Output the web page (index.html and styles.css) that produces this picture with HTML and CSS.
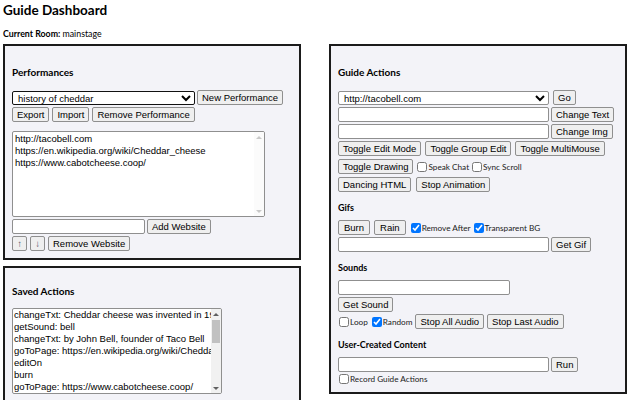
FILE: index.html
```html
<!DOCTYPE html>
<html>
<head>
<meta charset="utf-8">
<title>Guide Dashboard</title>
<link rel="stylesheet" href="styles.css">
</head>
<body>
<h1 class="page-title">Guide Dashboard</h1>
<div class="room"><b>Current Room:</b> mainstage</div>
<div class="layout">
  <div class="col">
    <section class="panel perf">
      <h3 class="panel-title">Performances</h3>
      <div class="row">
        <select class="sel perf-sel"><option>history of cheddar</option></select>
        <button>New Performance</button>
      </div>
      <div class="row gap3">
        <button>Export</button>
        <button>Import</button>
        <button>Remove Performance</button>
      </div>
      <div class="scrollbox sites-box">
        <textarea class="sites">http://tacobell.com
https://en.wikipedia.org/wiki/Cheddar_cheese
https://www.cabotcheese.coop/</textarea>
        <div class="vscroll light">
          <span class="sb-btn up"></span>
          <span class="sb-track"></span>
          <span class="sb-btn down"></span>
        </div>
      </div>
      <div class="row">
        <input type="text" class="site-in">
        <button>Add Website</button>
      </div>
      <div class="row gap3">
        <button class="arrow">&#8593;</button>
        <button class="arrow">&#8595;</button>
        <button>Remove Website</button>
      </div>
    </section>
    <section class="panel saved">
      <h3 class="panel-title">Saved Actions</h3>
      <div class="scrollbox actions-box">
        <select class="actions" multiple size="7">
          <option>changeTxt: Cheddar cheese was invented in 1900s</option>
          <option>getSound: bell</option>
          <option>changeTxt: by John Bell, founder of Taco Bell</option>
          <option>goToPage: https://en.wikipedia.org/wiki/Cheddar_cheese</option>
          <option>editOn</option>
          <option>burn</option>
          <option>goToPage: https://www.cabotcheese.coop/</option>
          <option>changeTxt: Cabot makes cheddar</option>
          <option>getSound: applause</option>
          <option>rain</option>
          <option>editOff</option>
          <option>getGif: cheese</option>
          <option>toggleDrawing</option>
          <option>changeImg: cheese</option>
          <option>goToPage: http://tacobell.com</option>
          <option>dancingHTML</option>
          <option>stopAnimation</option>
          <option>getSound: moo</option>
          <option>burn</option>
          <option>changeTxt: The end</option>
          <option>stopAllAudio</option>
          <option>editOff</option>
          <option>rain</option>
        </select>
        <div class="vscroll">
          <span class="sb-btn up dark"></span>
          <span class="sb-track"><span class="sb-thumb"></span></span>
          <span class="sb-btn down dark"></span>
        </div>
      </div>
    </section>
  </div>
  <section class="panel guide">
    <h3 class="panel-title">Guide Actions</h3>
    <div class="row gap4">
      <select class="sel wide"><option>http://tacobell.com</option></select>
      <button>Go</button>
    </div>
    <div class="row">
      <input type="text" class="wide">
      <button>Change Text</button>
    </div>
    <div class="row">
      <input type="text" class="wide">
      <button>Change Img</button>
    </div>
    <div class="row gap4">
      <button>Toggle Edit Mode</button>
      <button>Toggle Group Edit</button>
      <button>Toggle MultiMouse</button>
    </div>
    <div class="row gap3 tall">
      <button>Toggle Drawing</button>
      <span class="checks">
        <label class="check"><input type="checkbox">Speak Chat</label>
        <label class="check"><input type="checkbox">Sync Scroll</label>
      </span>
    </div>
    <div class="row gap5">
      <button>Dancing HTML</button>
      <button>Stop Animation</button>
    </div>
    <h4 class="sub-title">Gifs</h4>
    <div class="row gap4">
      <button class="padded">Burn</button>
      <button class="padded">Rain</button>
      <span class="checks">
        <label class="check"><input type="checkbox" checked>Remove After</label>
        <label class="check"><input type="checkbox" checked>Transparent BG</label>
      </span>
    </div>
    <div class="row">
      <input type="text" class="wide">
      <button>Get Gif</button>
    </div>
    <h4 class="sub-title">Sounds</h4>
    <div class="row">
      <input type="text" class="sound-in">
    </div>
    <div class="row">
      <button>Get Sound</button>
    </div>
    <div class="row gap3">
      <label class="check"><input type="checkbox">Loop</label>
      <label class="check"><input type="checkbox" checked>Random</label>
      <button>Stop All Audio</button>
      <button>Stop Last Audio</button>
    </div>
    <h4 class="sub-title">User-Created Content</h4>
    <div class="row">
      <input type="text" class="wide">
      <button>Run</button>
    </div>
    <label class="check record"><input type="checkbox">Record Guide Actions</label>
  </section>
</div>
</body>
</html>
```
FILE: styles.css
```css
html, body {
  margin: 0;
  background: #ffffff;
}
body {
  padding: 0 3px;
  font-family: Lato, "Open Sans", sans-serif;
  color: #000;
}
.page-title {
  font-size: 13.5px;
  font-weight: 700;
  line-height: 16px;
  margin: 2px 0 0;
}
.room {
  font-size: 8.8px;
  line-height: 10px;
  margin-top: 11px;
}
.layout {
  display: flex;
  align-items: flex-start;
  gap: 28px;
  margin-top: 5px;
}
.col {
  width: 298px;
  display: flex;
  flex-direction: column;
  gap: 6px;
}
.panel {
  box-sizing: border-box;
  border: 2px solid #1b1b1b;
  background: #f3f3f8;
  padding: 21px 7px 8px;
}
.guide {
  width: 298px;
  height: 350px;
}
.perf { height: 216px; }
.saved { height: 140px; padding-top: 18px; }
.panel-title {
  font-size: 10px;
  font-weight: 700;
  line-height: 10px;
  margin: 0 0 13px;
}
.saved .panel-title { margin-bottom: 12px; }
.sub-title {
  font-size: 9px;
  font-weight: 700;
  line-height: 10px;
  margin: 11px 0 7px;
}
.row {
  display: flex;
  align-items: center;
  gap: 2px;
  margin-bottom: 2px;
}
.row.gap3 { gap: 3px; }
.row.gap4 { gap: 4px; }
.row.gap5 { gap: 5px; }
.row.tall { margin: 3px 0 3px; }
.checks {
  display: inline-flex;
  align-items: center;
  gap: 2px;
}

button {
  font-family: "Liberation Sans", Arial, sans-serif;
  font-size: 9.5px;
  height: 15px;
  line-height: 13px;
  padding: 0 4px;
  margin: 0;
  background: #efefef;
  border: 1px solid #8f8f8f;
  border-radius: 2px;
  color: #000;
  box-sizing: border-box;
}
button.padded { padding: 0 5px; }
button.arrow {
  width: 15px;
  padding: 0;
  color: #556;
}
input[type=text] {
  font-family: "Liberation Sans", Arial, sans-serif;
  font-size: 9.5px;
  height: 15px;
  box-sizing: border-box;
  border: 1px solid #8f8f8f;
  border-radius: 2px;
  background: #fff;
  padding: 0 2px;
  margin: 0;
}
.sel {
  font-family: "Liberation Sans", Arial, sans-serif;
  font-size: 9.5px;
  height: 14px;
  box-sizing: border-box;
  border: 1px solid #8f8f8f;
  border-radius: 2px;
  background: #fff;
  padding: 0 1px;
  margin: 0;
  color: #000;
}
.perf-sel {
  width: 183px;
  border-color: #111;
}
.wide { width: 211px; }
.site-in { width: 133px; }
.sound-in { width: 172px; }

.scrollbox {
  display: flex;
  box-sizing: border-box;
  border: 1px solid #8f8f8f;
  border-radius: 2px;
  background: #fff;
  overflow: hidden;
}
.sites-box {
  width: 253px;
  height: 86px;
  margin: 9px 0 2px;
}
.actions-box {
  width: 210px;
  height: 86px;
}
.sites {
  flex: 1;
  min-width: 0;
  margin: 0;
  padding: 1px 2px;
  font-family: "Liberation Sans", Arial, sans-serif;
  font-size: 9.5px;
  line-height: 12px;
  border: none;
  outline: none;
  background: transparent;
  resize: none;
  overflow: hidden;
  scrollbar-width: none;
}
.actions {
  flex: 1;
  min-width: 0;
  margin: 0;
  padding: 0;
  font-family: "Liberation Sans", Arial, sans-serif;
  font-size: 9.5px;
  border: none;
  outline: none;
  background: transparent;
  overflow: hidden;
  scrollbar-width: none;
}
.actions option {
  padding: 0 1px;
  line-height: 12px;
  height: 12px;
  min-height: 12px;
  color: #000;
}

.vscroll {
  width: 10px;
  flex: none;
  display: flex;
  flex-direction: column;
  background: #f1f1f1;
}
.vscroll.light {
  background: #fbfbfb;
}
.sb-btn {
  height: 10px;
  flex: none;
  display: flex;
  align-items: center;
  justify-content: center;
}
.sb-btn::before {
  content: "";
  width: 0;
  height: 0;
  border-left: 3px solid transparent;
  border-right: 3px solid transparent;
}
.sb-btn.up::before { border-bottom: 3px solid #c8c8c8; }
.sb-btn.down::before { border-top: 3px solid #c8c8c8; }
.sb-btn.up.dark::before { border-bottom-color: #606060; }
.sb-btn.down.dark::before { border-top-color: #606060; }
.sb-track {
  flex: 1;
  display: flex;
  flex-direction: column;
  padding: 1px 1px 0;
}
.sb-thumb {
  height: 23px;
  background: #c1c1c1;
}

.check {
  display: inline-flex;
  align-items: center;
  font-size: 8.2px;
  line-height: 10px;
  color: #222;
}
.check input {
  width: 10px;
  height: 10px;
  margin: 0 1px 0 1px;
}
.record {
  display: flex;
  margin-top: 2px;
}
```
